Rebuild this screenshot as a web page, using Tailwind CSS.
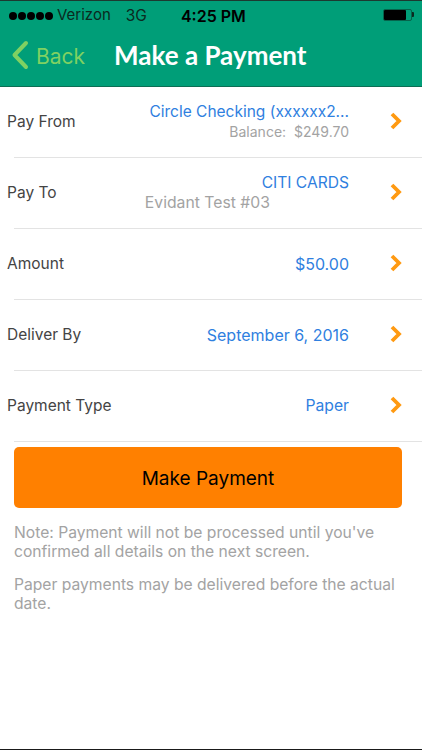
<!DOCTYPE html>
<html>
<head>
<meta charset="utf-8">
<script src="https://cdn.jsdelivr.net/npm/@tailwindcss/browser@4"></script>
</head>
<body class="bg-white">
<div class="w-[422px] h-[750px] flex flex-col overflow-hidden bg-white border-b border-b-[#1a1a1a] font-['Inter',sans-serif]">
    <!-- status bar + nav -->
    <div class="h-[87px] shrink-0 bg-[#009e78] border-t border-t-[#1c3a30] border-b border-b-[#0c6e54] flex flex-col">
        <div class="h-[29px] shrink-0 flex items-center pl-[9px] pr-[8px] text-[15px] text-[#0b2a20]">
            <div class="flex gap-[1px]">
                <span class="w-[8px] h-[8px] rounded-full bg-black"></span>
                <span class="w-[8px] h-[8px] rounded-full bg-black"></span>
                <span class="w-[8px] h-[8px] rounded-full bg-black"></span>
                <span class="w-[8px] h-[8px] rounded-full bg-black"></span>
                <span class="w-[8px] h-[8px] rounded-full bg-black"></span>
            </div>
            <span class="ml-[4px]">Verizon</span>
            <span class="ml-[15px] text-[15.5px]">3G</span>
            <span class="ml-[34px] font-semibold text-[16px] text-black">4:25 PM</span>
            <div class="ml-auto -mt-[2px] flex items-center">
                <div class="w-[29px] h-[12px] rounded-[2px] border border-[#0b2a20]/50">
                    <div class="w-[22px] h-full bg-black rounded-[1px]"></div>
                </div>
                <div class="w-[2px] h-[5px] bg-[#0b2a20] rounded-r-[1px]"></div>
            </div>
        </div>
        <div class="flex items-center h-[50px]">
            <svg class="ml-[11px]" width="18" height="30" viewBox="0 0 18 30" fill="none"><path d="M15 3 L3.5 15 L15 27" stroke="#7fd162" stroke-width="4" stroke-linecap="round" stroke-linejoin="round"/></svg>
            <span class="ml-[7px] mt-[3px] text-[21px] text-[#7fd162]">Back</span>
            <span class="ml-[29px] text-[26px] font-bold text-white font-['Lato',sans-serif]">Make a Payment</span>
        </div>
    </div>

    <!-- form rows -->
    <div class="flex flex-col">
        <div class="h-[71px] flex items-center relative">
            <span class="ml-[7px] -mt-[2px] text-[15.5px] text-[#444444]">Pay From</span>
            <div class="ml-auto mr-[73px] -mt-[2px] text-right">
                <div class="text-[15.5px] leading-[19px] text-[#2f80e0]">Circle Checking (xxxxxx2...</div>
                <div class="text-[14px] leading-[21px] text-[#a3a3a3]">Balance:&nbsp; $249.70</div>
            </div>
            <svg class="absolute left-[389px] top-[25px]" width="13" height="18" viewBox="0 0 13 18" fill="none"><path d="M3 2 L10 9 L3 16" stroke="#ff9a12" stroke-width="3.8"/></svg>
            <div class="absolute left-[14px] right-0 bottom-0 h-px bg-[#e3e3e3]"></div>
        </div>
        <div class="h-[71px] flex items-center relative">
            <span class="ml-[7px] -mt-[2px] text-[15.5px] text-[#444444]">Pay To</span>
            <div class="ml-auto mr-[73px] -mt-[2px] text-right">
                <div class="text-[15.6px] leading-[20px] text-[#2f80e0]">CITI CARDS</div>
                <div class="text-[15.75px] leading-[19px] text-[#a3a3a3] mr-[79px]">Evidant Test #03</div>
            </div>
            <svg class="absolute left-[389px] top-[25px]" width="13" height="18" viewBox="0 0 13 18" fill="none"><path d="M3 2 L10 9 L3 16" stroke="#ff9a12" stroke-width="3.8"/></svg>
            <div class="absolute left-[14px] right-0 bottom-0 h-px bg-[#e3e3e3]"></div>
        </div>
        <div class="h-[71px] flex items-center relative">
            <span class="ml-[7px] -mt-[2px] text-[15.5px] text-[#444444]">Amount</span>
            <div class="ml-auto mr-[73px] -mt-[2px] text-[16px] text-[#2f80e0]">$50.00</div>
            <svg class="absolute left-[389px] top-[25px]" width="13" height="18" viewBox="0 0 13 18" fill="none"><path d="M3 2 L10 9 L3 16" stroke="#ff9a12" stroke-width="3.8"/></svg>
            <div class="absolute left-[14px] right-0 bottom-0 h-px bg-[#e3e3e3]"></div>
        </div>
        <div class="h-[71px] flex items-center relative">
            <span class="ml-[7px] -mt-[2px] text-[15.5px] text-[#444444]">Deliver By</span>
            <div class="ml-auto mr-[73px] -mt-[2px] text-[16px] text-[#2f80e0]">September 6, 2016</div>
            <svg class="absolute left-[389px] top-[25px]" width="13" height="18" viewBox="0 0 13 18" fill="none"><path d="M3 2 L10 9 L3 16" stroke="#ff9a12" stroke-width="3.8"/></svg>
            <div class="absolute left-[14px] right-0 bottom-0 h-px bg-[#e3e3e3]"></div>
        </div>
        <div class="h-[71px] flex items-center relative">
            <span class="ml-[7px] -mt-[2px] text-[15.5px] text-[#444444]">Payment Type</span>
            <div class="ml-auto mr-[73px] -mt-[2px] text-[15.7px] text-[#2f80e0]">Paper</div>
            <svg class="absolute left-[389px] top-[25px]" width="13" height="18" viewBox="0 0 13 18" fill="none"><path d="M3 2 L10 9 L3 16" stroke="#ff9a12" stroke-width="3.8"/></svg>
            <div class="absolute left-[14px] right-0 bottom-0 h-px bg-[#e3e3e3]"></div>
        </div>
    </div>

    <button class="mt-[5px] ml-[14px] w-[388px] h-[61px] shrink-0 pt-[3px] rounded-[5px] bg-[#ff8000] text-black text-[19px]">Make Payment</button>

    <div class="mx-[14px] mt-[15px] text-[15.65px] leading-[19px] text-[#a3a3a3]">
        <p>Note: Payment will not be processed until you've confirmed all details on the next screen.</p>
        <p class="mt-[14px]">Paper payments may be delivered before the actual date.</p>
    </div>
</div>
</body>
</html>
